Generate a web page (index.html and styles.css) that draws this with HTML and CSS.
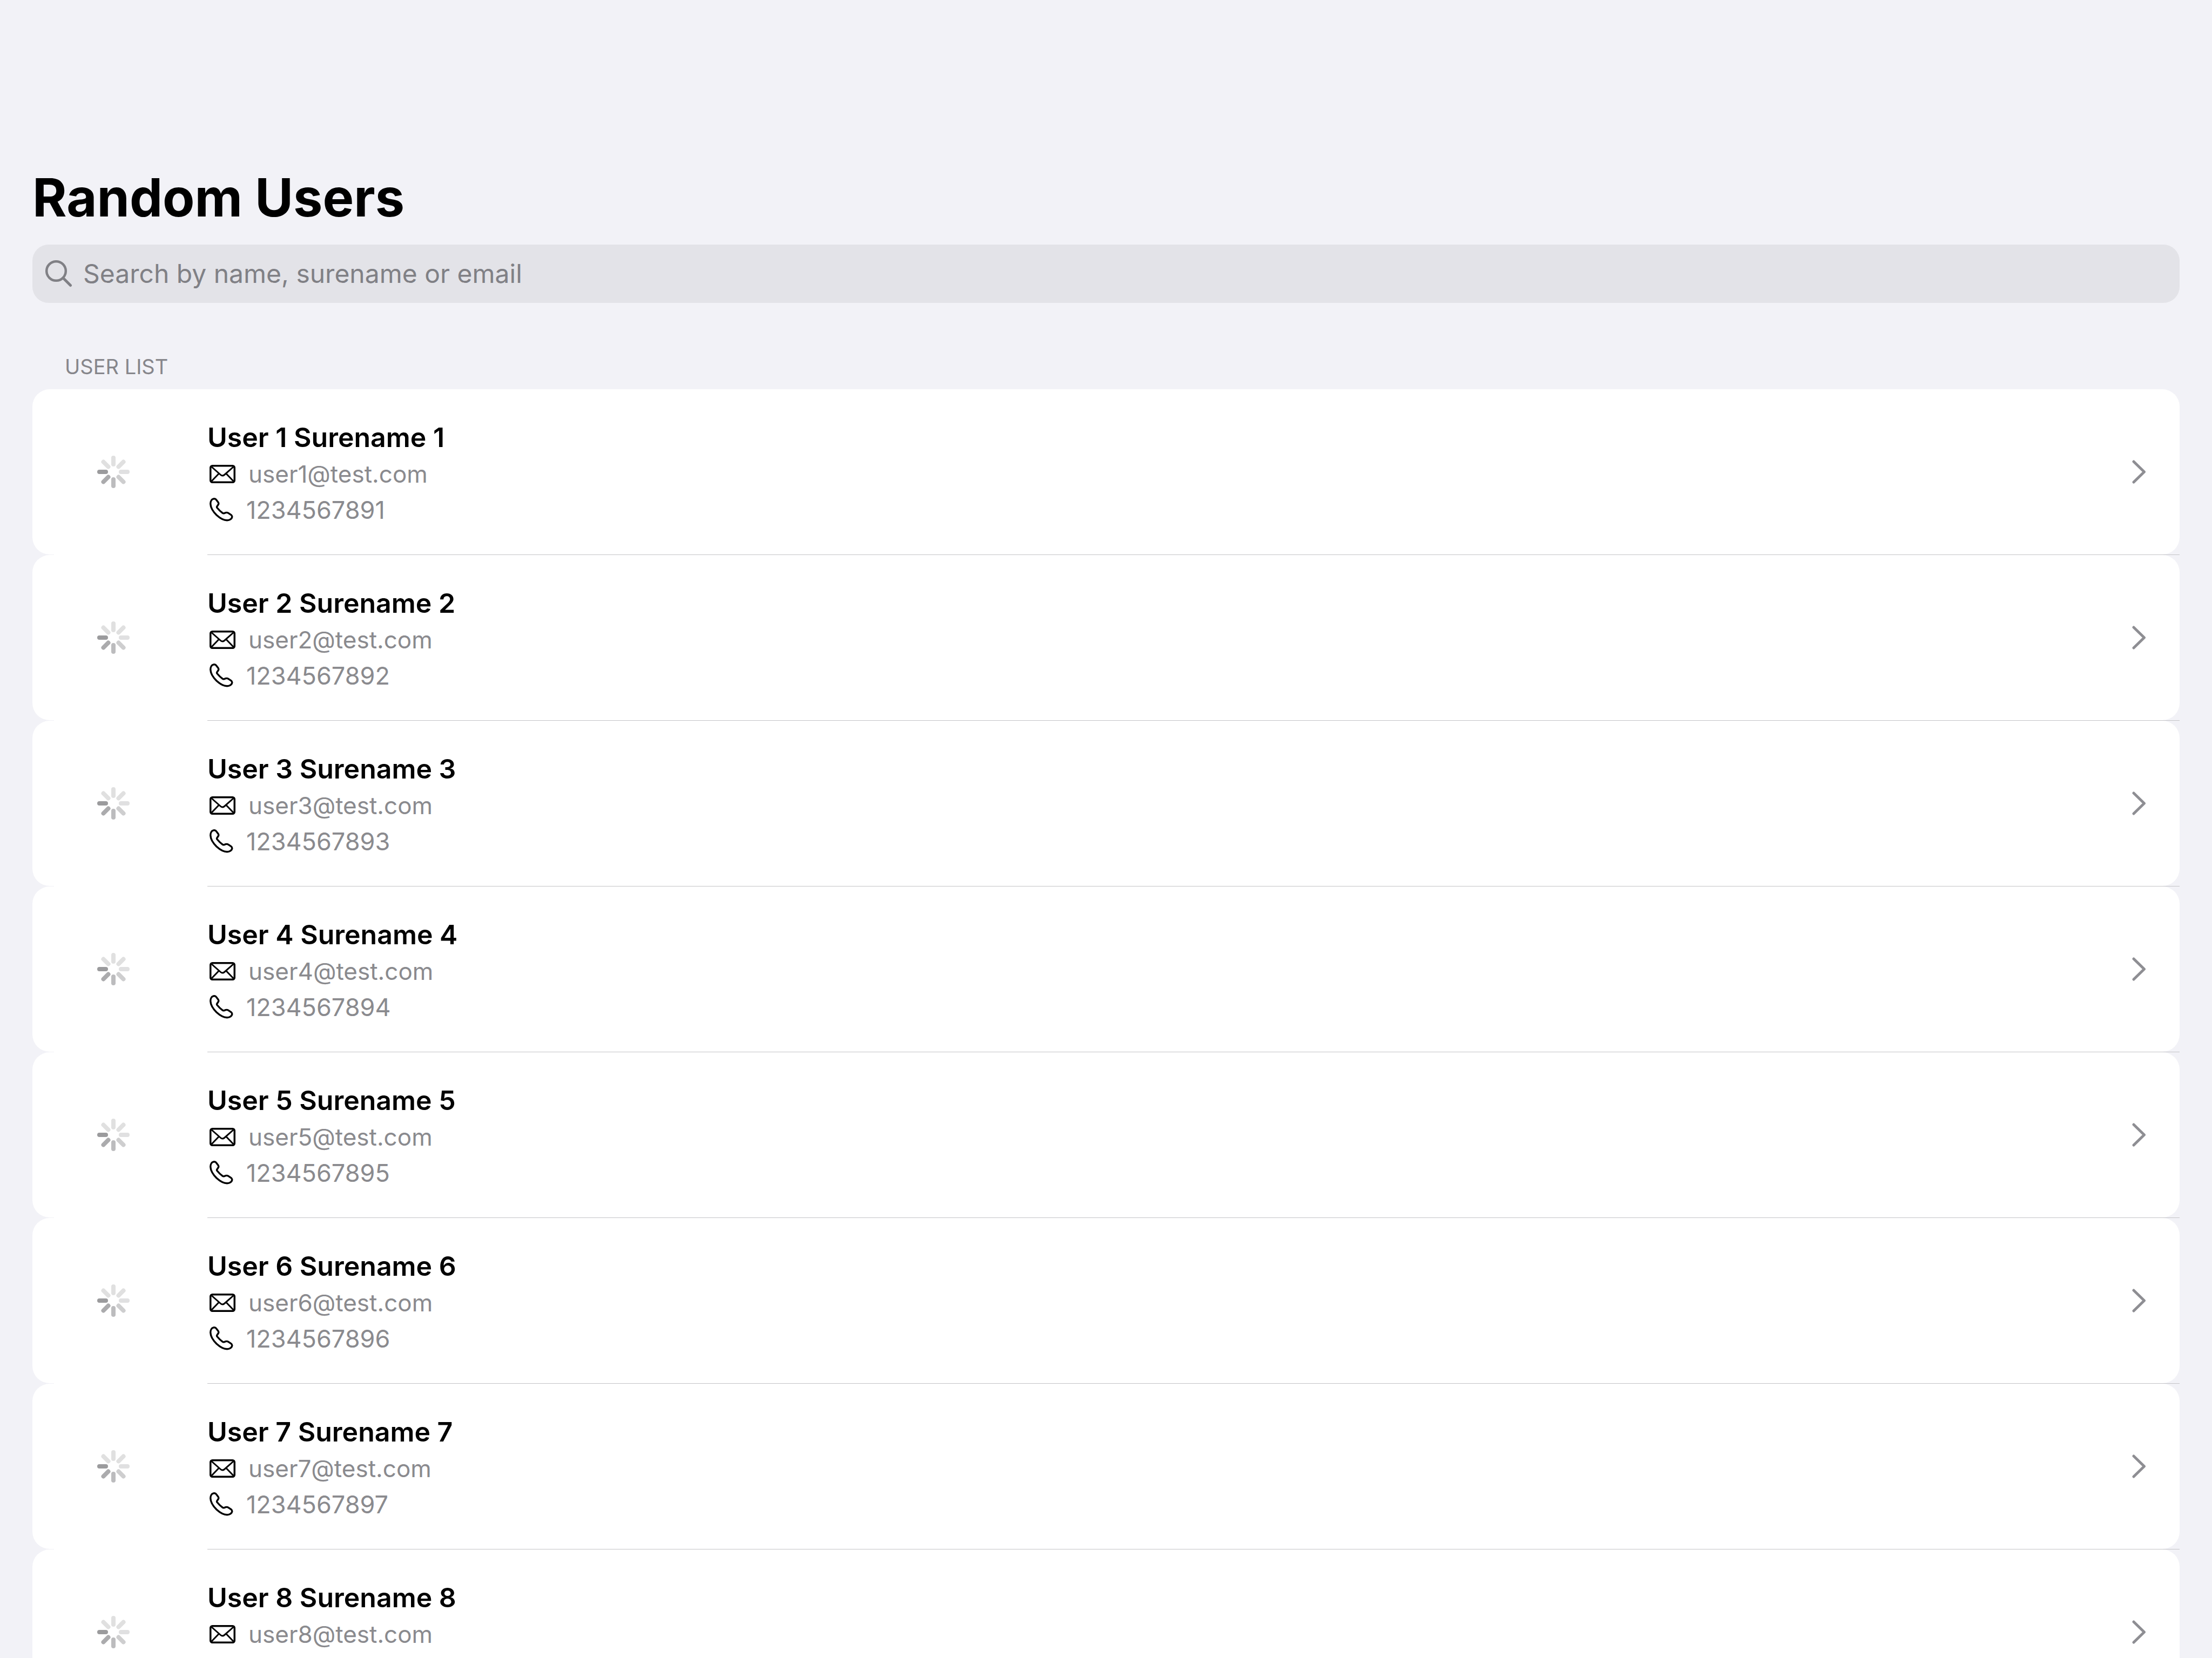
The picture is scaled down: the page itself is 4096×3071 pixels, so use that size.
FILE: index.html
```html
<!DOCTYPE html>
<html lang="en">
<head>
<meta charset="utf-8">
<title>Random Users</title>
<link rel="stylesheet" href="styles.css">
</head>
<body>
<svg class="sprite" aria-hidden="true">
  <symbol id="spinner" viewBox="0 0 60 60">
    <g stroke-width="8" stroke-linecap="round">
      <path d="M30 4v12" stroke="#e0e0e0"/>
      <path d="M48.500 11.500l-9 9" stroke="#e0e0e0"/>
      <path d="M56 30H44" stroke="#e0e0e1"/>
      <path d="M48.500 48.500l-9-9" stroke="#cececf"/>
      <path d="M30 56V44" stroke="#bcbcbe"/>
      <path d="M11.500 48.500l9-9" stroke="#ababad"/>
      <path d="M4 30h12" stroke="#9b9b9d"/>
      <path d="M11.500 11.500l9 9" stroke="#e0e0e0"/>
    </g>
  </symbol>
  <symbol id="mail" viewBox="0 0 48 34">
    <g fill="none" stroke="#000" stroke-width="3.500" stroke-linecap="round" stroke-linejoin="round">
      <rect x="1.750" y="1.750" width="44.500" height="30.500" rx="3.500"/>
      <path stroke-width="3" d="M3 3l17.500 15.500q3.500 3 7 0L45 3M3 31l14-14.500M45 31L31 16.500"/>
    </g>
  </symbol>
  <symbol id="phone" viewBox="0 0 44 44">
    <path fill="none" stroke="#000" stroke-width="3.400" stroke-linejoin="round" d="M8.500 1.800C4 2.200 1.600 6.500 1.800 11.500 2 18 7 26 13 32c6 5.500 13 9.700 19.500 9.700 5 0 8.800-2.700 9.300-6.300.2-1.700-.7-2.800-2-3.700l-5.300-3.500c-1.500-1-3-.9-4.500-.6l-3.500 1.200c-1 .3-1.600.1-2.500-.6-4-3-7.500-6.700-10-9.700-.7-1-.7-1.600-.1-2.500l2.300-3.500c.9-1.300.7-2.600-.1-4L12.500 3.700C11.500 2.200 10.300 1.700 8.500 1.800z"/>
  </symbol>
  <symbol id="chevron" viewBox="0 0 26 44">
    <path fill="none" stroke="#8e8e93" stroke-width="5" stroke-linecap="round" stroke-linejoin="round" d="M3 3l19.500 19L3 41"/>
  </symbol>
</svg>
<main class="page">
  <h1 class="title">Random Users</h1>
  <label class="search">
    <svg class="search-icon" viewBox="0 0 50 50" aria-hidden="true">
      <g fill="none" stroke="#808085" stroke-width="4.500" stroke-linecap="round"><circle cx="20" cy="20" r="17.800"/><path stroke-width="5" d="M33 33l13.500 13.500"/></g>
    </svg>
    <input class="search-input" type="search" placeholder="Search by name, surename or email" aria-label="Search users">
  </label>
  <h2 class="section">USER LIST</h2>
  <ul class="list" id="list"></ul>
</main>
<script src="users.js"></script>
</body>
</html>
```
FILE: styles.css
```css
* {
  box-sizing: border-box;
}

body {
  margin: 0;
  background: #f2f2f7;
  color: #000;
  font-family: Inter, "Liberation Sans", sans-serif;
  height: 100vh;
  overflow: hidden;
}

.sprite {
  display: none;
}

.page {
  padding: 304px 60px 0;
}

.title {
  margin: 0;
  font-size: 97px;
  line-height: 124px;
  font-weight: 700;
}

.search {
  display: flex;
  align-items: center;
  gap: 20px;
  height: 108px;
  margin-top: 25px;
  padding: 0 24px;
  border-radius: 30px;
  background: #e3e3e8;
}

.search-icon {
  width: 50px;
  height: 50px;
}

.search-input {
  flex: 1;
  padding: 0;
  border: 0;
  outline: 0;
  background: none;
  font: 400 48px/64px Inter, "Liberation Sans", sans-serif;
}

.search-input::placeholder {
  color: #808085;
  opacity: 1;
}

.section {
  margin: 94px 60px 18px;
  color: #86868b;
  font-size: 38px;
  line-height: 48px;
  font-weight: 400;
}

.list {
  margin: 0;
  padding: 0;
  list-style: none;
}

.row {
  display: flex;
  flex-direction: column;
  height: 307px;
}

.row::after {
  content: "";
  height: 1px;
  margin-left: 40px;
  background: linear-gradient(to right, #fff 284px, #c4c4c7 284px);
}

.card {
  display: flex;
  flex: 1;
  align-items: center;
  padding: 0 62px 0 120px;
  border-radius: 32px;
  background: #fff;
  color: inherit;
  text-decoration: none;
}

.spinner {
  width: 60px;
  height: 60px;
}

.info {
  flex: 1;
  margin-left: 144px;
  padding-top: 4px;
}

.name {
  display: block;
  font-size: 50px;
  line-height: 70px;
  font-weight: 600;
}

.contact {
  display: flex;
  align-items: center;
  height: 66px;
  padding-left: 4px;
  color: #8a8a8e;
  font-size: 45px;
}

.email {
  font-size: 44px;
}

.mail {
  width: 48px;
  height: 34px;
  margin-right: 24px;
}

.phone {
  width: 44px;
  height: 44px;
  margin-right: 24px;
}

.chevron {
  width: 26px;
  height: 44px;
}
```
FILE: users.js
```js
const list = document.getElementById("list");
for (let n = 1; n <= 8; n++) {
  list.insertAdjacentHTML("beforeend", `
    <li class="row">
      <a class="card" href="#user-${n}">
        <svg class="spinner" aria-hidden="true"><use href="#spinner"/></svg>
        <span class="info">
          <span class="name">User ${n} Surename ${n}</span>
          <span class="contact email"><svg class="mail" aria-hidden="true"><use href="#mail"/></svg>user${n}@test.com</span>
          <span class="contact"><svg class="phone" aria-hidden="true"><use href="#phone"/></svg>123456789${n}</span>
        </span>
        <svg class="chevron" aria-hidden="true"><use href="#chevron"/></svg>
      </a>
    </li>`);
}
```
